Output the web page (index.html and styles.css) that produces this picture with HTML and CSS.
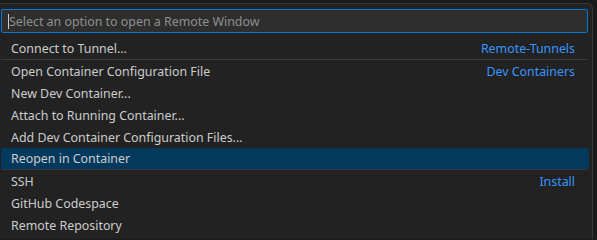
FILE: index.html
```html
<!DOCTYPE html>
<html>
<head>
<meta charset="utf-8">
<link rel="stylesheet" href="styles.css">
</head>
<body>
<div class="widget">
  <div class="input"><span class="caret"></span><span class="placeholder">Select an option to open a Remote Window</span></div>
  <div class="list">
    <div class="row"><span class="label">Connect to Tunnel...</span><span class="group">Remote-Tunnels</span></div>
    <div class="row sep"><span class="label">Open Container Configuration File</span><span class="group">Dev Containers</span></div>
    <div class="row"><span class="label">New Dev Container...</span></div>
    <div class="row"><span class="label">Attach to Running Container...</span></div>
    <div class="row"><span class="label">Add Dev Container Configuration Files...</span></div>
    <div class="row focused"><span class="label">Reopen in Container</span></div>
    <div class="row sep"><span class="label">SSH</span><span class="group">Install</span></div>
    <div class="row"><span class="label">GitHub Codespace</span></div>
    <div class="row"><span class="label">Remote Repository</span></div>
  </div>
</div>
</body>
</html>
```
FILE: styles.css
```css
html, body {
  margin: 0;
  padding: 0;
  background: #1b1b1b;
  overflow: hidden;
}
body {
  width: 597px;
  height: 239px;
  font-family: "Noto Sans", "Open Sans", sans-serif;
  font-size: 12.4px;
  color: #cccccc;
}
.widget {
  margin-top: 3px;
  width: 593px;
  height: 240px;
  background: #222222;
  border-top: 1px solid #3a3a3a;
  border-right: 1px solid #3a3a3a;
  border-top-right-radius: 6px;
  padding: 5px 3px 0 1px;
  box-sizing: border-box;
}
.input {
  height: 24px;
  box-sizing: border-box;
  border: 1px solid #0078d4;
  border-radius: 2px;
  background: #2e2e2e;
  display: flex;
  align-items: center;
  padding-left: 6px;
  margin-right: 1px;
}
.caret {
  width: 1px;
  height: 15px;
  background: #cccccc;
}
.placeholder {
  color: #8f8f8f;
}
.list {
  margin-top: 4px;
}
.row {
  height: 22px;
  display: flex;
  align-items: center;
  justify-content: space-between;
  padding: 0 14px 0 10px;
  box-sizing: border-box;
  border-radius: 0 3px 3px 0;
}
.row.sep {
  border-top: 1px solid #3c3c3c;
  height: 23px;
  border-radius: 0;
  margin-right: 1px;
  padding-right: 13px;
}
.focused {
  background: #04395e;
  border-bottom: 1px solid #2f3a44;
}
.focused + .row.sep {
  border-top: none;
  height: 22px;
}
.group {
  color: #3794ff;
}
```
